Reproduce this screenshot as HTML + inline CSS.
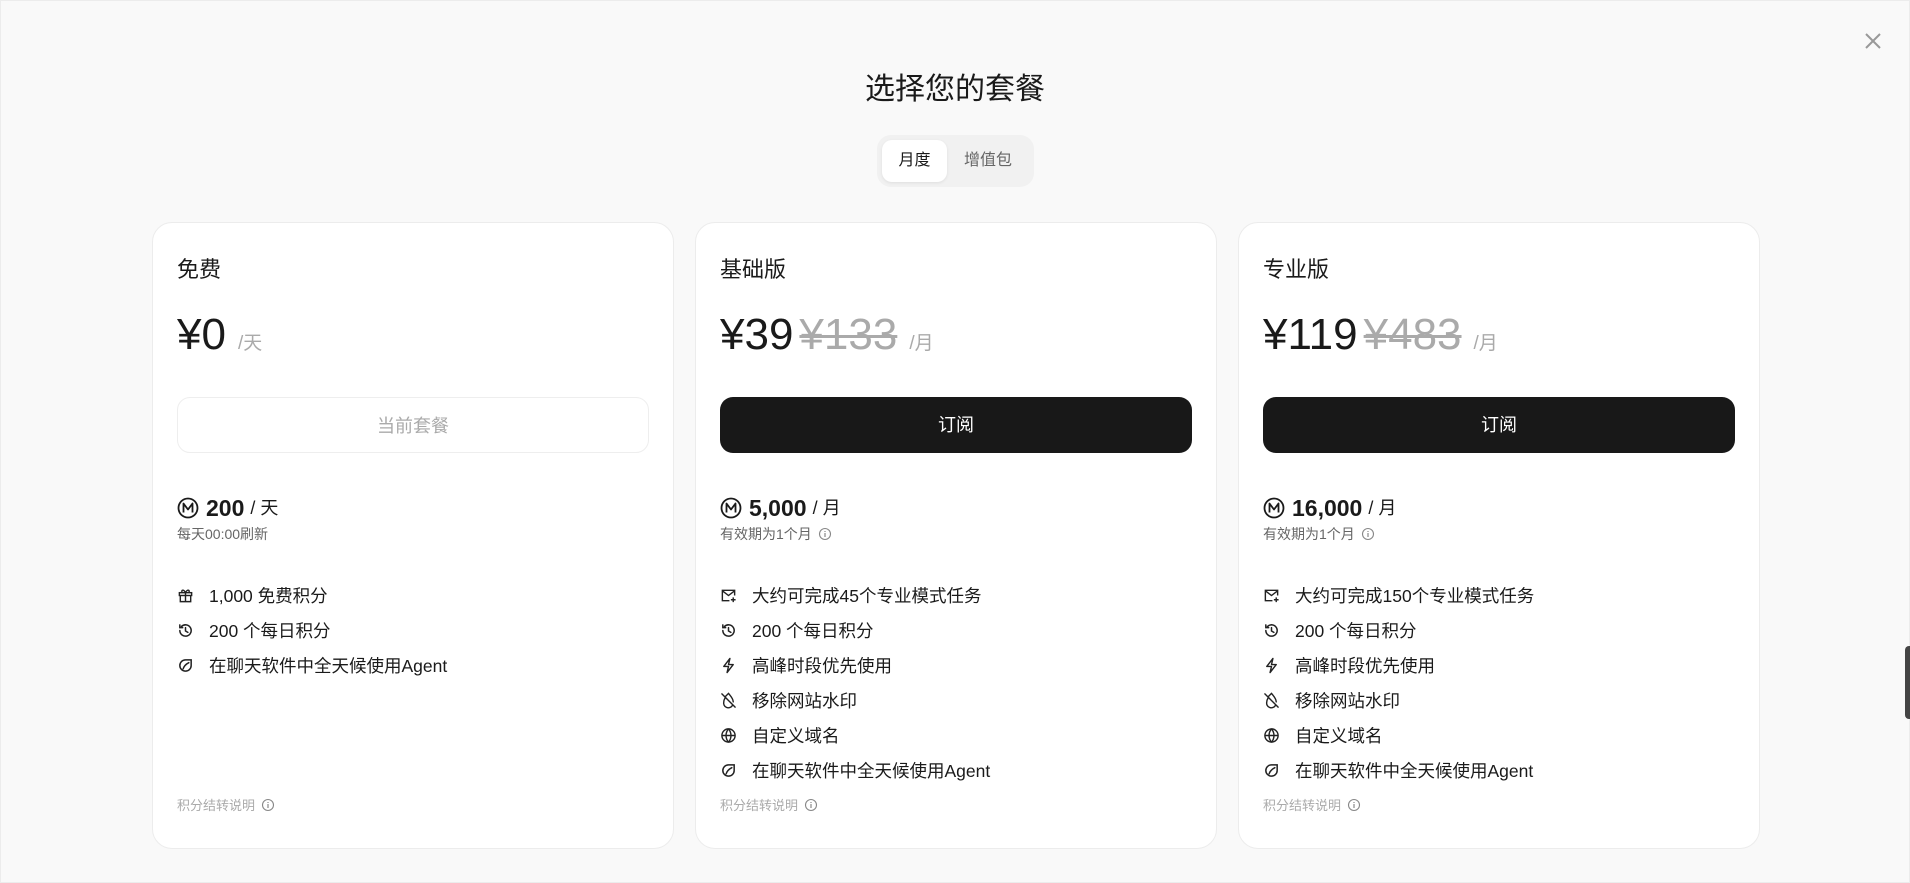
<!DOCTYPE html>
<html><head><meta charset="utf-8">
<style>
*{box-sizing:border-box;margin:0;padding:0}
body{width:1910px;height:883px;background:#f9f9f9;font-family:"Liberation Sans","Noto Sans CJK SC",sans-serif;color:#1a1a1a;position:relative;overflow:hidden;border:1px solid #ececec}
.title{position:absolute;top:63px;left:0;width:100%;text-align:center;font-size:30px;font-weight:400;color:#1a1a1a}
.toggle{position:absolute;left:876px;top:134px;width:157px;height:52px;background:#f1f1f1;border-radius:14px}
.toggle .a{position:absolute;left:5px;top:5px;width:65px;height:42px;background:#fff;border-radius:10px;box-shadow:0 1px 3px rgba(0,0,0,.08);font-size:16px;line-height:42px;text-align:center;color:#1a1a1a}
.toggle .b{position:absolute;left:76px;top:5px;width:70px;line-height:42px;font-size:16px;color:#666;text-align:center}
.close{position:absolute;left:1863px;top:31px}
.card{position:absolute;top:221px;width:522px;height:627px;background:#fff;border:1px solid #ececec;border-radius:20px;padding:0 24px}
.name{margin-top:32px;font-size:22px;line-height:30px}
.price{margin-top:22px;height:56px;display:flex;align-items:baseline;font-size:44px;line-height:56px}
.price .old{color:#aaa;text-decoration:line-through;text-decoration-thickness:3px;margin-left:6px}
.price .u{font-size:19px;color:#aaa;margin-left:12px}
.btn{margin-top:34px;height:56px;border-radius:13px;background:#181818;color:#fff;font-size:18px;line-height:56px;text-align:center}
.btn.cur{background:#fff;border:1px solid #eee;color:#aaa}
.cr{margin-top:42px;display:flex;align-items:center;font-size:18px;line-height:26px}
.cr b{font-size:23px;margin:0 6px 0 7px}
.sub{font-size:14px;color:#666;margin-top:3px;display:flex;align-items:center;gap:6px}
.feats{margin-top:34px}
.f{display:flex;align-items:center;height:35px;font-size:17.5px}
.f svg{width:17px;height:17px;margin-right:15px;flex:none}
.foot{position:absolute;left:24px;bottom:34px;font-size:13px;color:#aaa;display:flex;align-items:center;gap:6px}
.tab{position:absolute;left:1904px;top:645px;width:6px;height:73px;background:#444;border-radius:4px 0 0 4px}
</style></head><body>
<div class="title">选择您的套餐</div>
<div class="toggle"><div class="a">月度</div><div class="b">增值包</div></div>
<svg class="close" width="18" height="18" viewBox="0 0 18 18"><path d="M2 2L16 16M16 2L2 16" stroke="#999" stroke-width="2"/></svg>

<svg width="0" height="0" style="position:absolute">
<defs>
<symbol id="m" viewBox="0 0 22 22"><circle cx="11" cy="11" r="9.5" fill="none" stroke="#1a1a1a" stroke-width="1.8"/><path d="M6.5 15.5V6.5L11 12.5L15.5 6.5V15.5" fill="none" stroke="#1a1a1a" stroke-width="1.8" stroke-linejoin="round"/></symbol>
<symbol id="i" viewBox="0 0 14 14"><circle cx="7" cy="7" r="5.5" fill="none" stroke="#888" stroke-width="1.1"/><path d="M7 6v4M7 4v1" stroke="#888" stroke-width="1.2"/></symbol>
<symbol id="gift" viewBox="0 0 18 18"><rect x="2.5" y="6" width="13" height="3" fill="none" stroke="#222" stroke-width="1.5"/><path d="M3.5 9v6.5h11V9M9 6v9.5M9 6C7 2 4 3 5.5 6M9 6c2-4 5-3 3.5 0" fill="none" stroke="#222" stroke-width="1.5"/></symbol>
<symbol id="hist" viewBox="0 0 18 18"><path d="M3 9a6 6 0 1 0 1.8-4.3M3 3v3h3M9 6v3.5l2.5 1.5" fill="none" stroke="#222" stroke-width="1.6" stroke-linecap="round"/></symbol>
<symbol id="leaf" viewBox="0 0 18 18"><path d="M9 3a6 6 0 1 0 6 6V3zM6.5 12.5c1-3 3-5 6-6.5" fill="none" stroke="#222" stroke-width="1.6" stroke-linecap="round"/></symbol>
<symbol id="mail" viewBox="0 0 18 18"><path d="M10 14.5H2.5v-11h13V9M2.5 4l6.5 5 6.5-5M14 11v5M11.5 13.5h5" fill="none" stroke="#222" stroke-width="1.5"/></symbol>
<symbol id="bolt" viewBox="0 0 18 18"><path d="M10.5 1.5L4 10h5l-1.5 6.5L14 8H9z" fill="none" stroke="#222" stroke-width="1.5" stroke-linejoin="round"/></symbol>
<symbol id="drop" viewBox="0 0 18 18"><path d="M6 4.5L9 1.5c2 2.5 5 5.5 5 9M13 14.5A5 5 0 0 1 4 10.5c0-1.5.6-2.8 1.3-4M2 2l14 14" fill="none" stroke="#222" stroke-width="1.5" stroke-linecap="round"/></symbol>
<symbol id="globe" viewBox="0 0 18 18"><circle cx="9" cy="9" r="7" fill="none" stroke="#222" stroke-width="1.5"/><path d="M2 9h14M9 2c-3.5 4-3.5 10 0 14M9 2c3.5 4 3.5 10 0 14" fill="none" stroke="#222" stroke-width="1.5"/></symbol>
</defs></svg>

<div class="card" style="left:151px">
<div class="name">免费</div>
<div class="price">¥0<span class="u">/天</span></div>
<div class="btn cur">当前套餐</div>
<div class="cr"><svg width="22" height="22"><use href="#m"/></svg><b>200</b>/ 天</div>
<div class="sub">每天00:00刷新</div>
<div class="feats">
<div class="f"><svg><use href="#gift"/></svg>1,000 免费积分</div>
<div class="f"><svg><use href="#hist"/></svg>200 个每日积分</div>
<div class="f"><svg><use href="#leaf"/></svg>在聊天软件中全天候使用Agent</div>
</div>
<div class="foot">积分结转说明 <svg width="14" height="14"><use href="#i"/></svg></div>
</div>

<div class="card" style="left:694px">
<div class="name">基础版</div>
<div class="price">¥39<span class="old">¥133</span><span class="u">/月</span></div>
<div class="btn">订阅</div>
<div class="cr"><svg width="22" height="22"><use href="#m"/></svg><b>5,000</b>/ 月</div>
<div class="sub">有效期为1个月 <svg width="14" height="14"><use href="#i"/></svg></div>
<div class="feats">
<div class="f"><svg><use href="#mail"/></svg>大约可完成45个专业模式任务</div>
<div class="f"><svg><use href="#hist"/></svg>200 个每日积分</div>
<div class="f"><svg><use href="#bolt"/></svg>高峰时段优先使用</div>
<div class="f"><svg><use href="#drop"/></svg>移除网站水印</div>
<div class="f"><svg><use href="#globe"/></svg>自定义域名</div>
<div class="f"><svg><use href="#leaf"/></svg>在聊天软件中全天候使用Agent</div>
</div>
<div class="foot">积分结转说明 <svg width="14" height="14"><use href="#i"/></svg></div>
</div>

<div class="card" style="left:1237px">
<div class="name">专业版</div>
<div class="price">¥119<span class="old">¥483</span><span class="u">/月</span></div>
<div class="btn">订阅</div>
<div class="cr"><svg width="22" height="22"><use href="#m"/></svg><b>16,000</b>/ 月</div>
<div class="sub">有效期为1个月 <svg width="14" height="14"><use href="#i"/></svg></div>
<div class="feats">
<div class="f"><svg><use href="#mail"/></svg>大约可完成150个专业模式任务</div>
<div class="f"><svg><use href="#hist"/></svg>200 个每日积分</div>
<div class="f"><svg><use href="#bolt"/></svg>高峰时段优先使用</div>
<div class="f"><svg><use href="#drop"/></svg>移除网站水印</div>
<div class="f"><svg><use href="#globe"/></svg>自定义域名</div>
<div class="f"><svg><use href="#leaf"/></svg>在聊天软件中全天候使用Agent</div>
</div>
<div class="foot">积分结转说明 <svg width="14" height="14"><use href="#i"/></svg></div>
</div>
<div class="tab"></div>
</body></html>
